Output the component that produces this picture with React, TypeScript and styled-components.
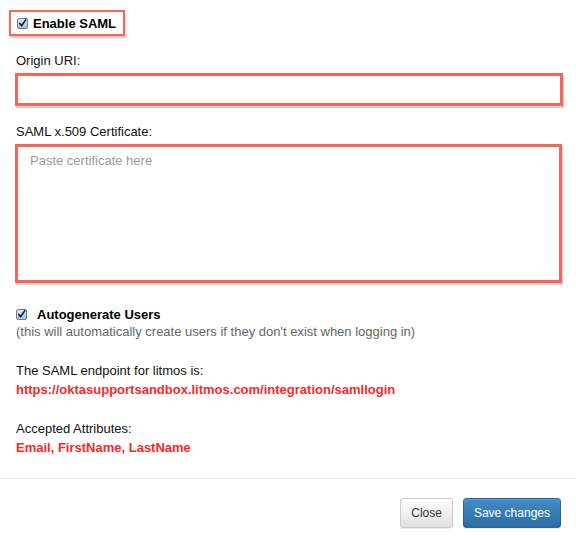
import React from "react";
import styled, { createGlobalStyle } from "styled-components";

const Global = createGlobalStyle`
  html, body { margin: 0; padding: 0; background: #fff; }
  body { font-family: "Liberation Sans", Arial, Helvetica, sans-serif; font-size: 13px; color: #000; }
`;

const Page = styled.div`
  width: 576px;
  height: 538px;
  overflow: hidden;
  display: flex;
  flex-direction: column;
`;

const Body = styled.div`
  padding: 10px 13px 0 15px;
  display: flex;
  flex-direction: column;
  align-items: flex-start;
`;

const RED = "#f4675a";

const EnableBox = styled.label`
  margin-left: -6px;
  height: 22px;
  display: inline-flex;
  align-items: center;
  gap: 5px;
  padding: 0 7px 0 6px;
  border: 2px solid ${RED};
  box-shadow: 1px 2px 2px rgba(0, 0, 0, 0.22);
  font-weight: bold;
  font-size: 13px;
`;

const Box = styled.span`
  width: 11px;
  height: 11px;
  box-sizing: border-box;
  border: 1px solid #6f7a8a;
  border-radius: 2px;
  background: linear-gradient(#dbe8f7, #9fc0e8);
  display: inline-flex;
  align-items: center;
  justify-content: center;
  flex: none;
`;

const Check = () => (
  <Box>
    <svg width="11" height="11" viewBox="0 0 11 11">
      <path d="M2.2 5.4 L4.4 8.2 L9.6 0.8" fill="none" stroke="#1a1a1a" strokeWidth="1.9" strokeLinecap="round" strokeLinejoin="round" />
    </svg>
  </Box>
);

const FieldLabel = styled.div<{ $top: number }>`
  margin-top: ${(p) => p.$top}px;
  line-height: 18px;
  padding-left: 1px;
  color: #111;
`;

const Framed = styled.div<{ $h: number; $w: number }>`
  margin-top: 3px;
  width: ${(p) => p.$w}px;
  height: ${(p) => p.$h}px;
  box-sizing: border-box;
  border: 3px solid ${RED};
  box-shadow: 1px 2px 1px rgba(0, 0, 0, 0.18);
  background: #fff;
  padding: 6px 12px;
  color: #9a9a9a;
  line-height: 16px;
`;

const CheckRow = styled.label`
  margin-top: 23px;
  padding-left: 1px;
  display: flex;
  align-items: center;
  gap: 10px;
  font-weight: bold;
  line-height: 17px;
`;

const Note = styled.div<{ $top?: number; $tone?: "muted" | "red" | "plain" }>`
  margin-top: ${(p) => p.$top ?? 0}px;
  padding-left: 1px;
  line-height: ${(p) => (p.$tone === "muted" ? 17 : 19)}px;
  color: ${(p) => (p.$tone === "muted" ? "#666" : p.$tone === "red" ? "#f72a2a" : "#111")};
  font-weight: ${(p) => (p.$tone === "red" ? "bold" : "normal")};
`;

const Divider = styled.div`
  margin-top: 21px;
  height: 1px;
  background: #e5e5e5;
`;

const Footer = styled.div`
  display: flex;
  justify-content: flex-end;
  gap: 10px;
  padding: 19px 15px 0 0;
`;

const Button = styled.button<{ $primary?: boolean }>`
  height: 30px;
  box-sizing: border-box;
  padding: 0 10px;
  border-radius: 3px;
  font-family: "Liberation Sans", Arial, sans-serif;
  font-size: 12px;
  cursor: pointer;
  border: 1px solid ${(p) => (p.$primary ? "#2b669a" : "#ccc")};
  color: ${(p) => (p.$primary ? "#fff" : "#333")};
  background: ${(p) =>
    p.$primary ? "linear-gradient(#428bca, #2d6ca2)" : "linear-gradient(#fff, #e0e0e0)"};
  box-shadow: inset 0 1px 0 rgba(255, 255, 255, 0.15), 0 1px 1px rgba(0, 0, 0, 0.075);
`;

export default function App() {
  return (
    <Page>
      <Global />
      <Body>
        <EnableBox>
          <Check />
          Enable SAML
        </EnableBox>
        <FieldLabel $top={16}>Origin URI:</FieldLabel>
        <Framed $h={33} $w={548} />
        <FieldLabel $top={17}>SAML x.509 Certificate:</FieldLabel>
        <Framed $h={139} $w={547}>Paste certificate here</Framed>
        <CheckRow>
          <Check />
          Autogenerate Users
        </CheckRow>
        <Note $tone="muted">
          (this will automatically create users if they don't exist when logging in)
        </Note>
        <Note $top={21}>The SAML endpoint for litmos is:</Note>
        <Note $tone="red">https://oktasupportsandbox.litmos.com/integration/samllogin</Note>
        <Note $top={20}>Accepted Attributes:</Note>
        <Note $tone="red">Email, FirstName, LastName</Note>
      </Body>
      <Divider />
      <Footer>
        <Button>Close</Button>
        <Button $primary>Save changes</Button>
      </Footer>
    </Page>
  );
}
